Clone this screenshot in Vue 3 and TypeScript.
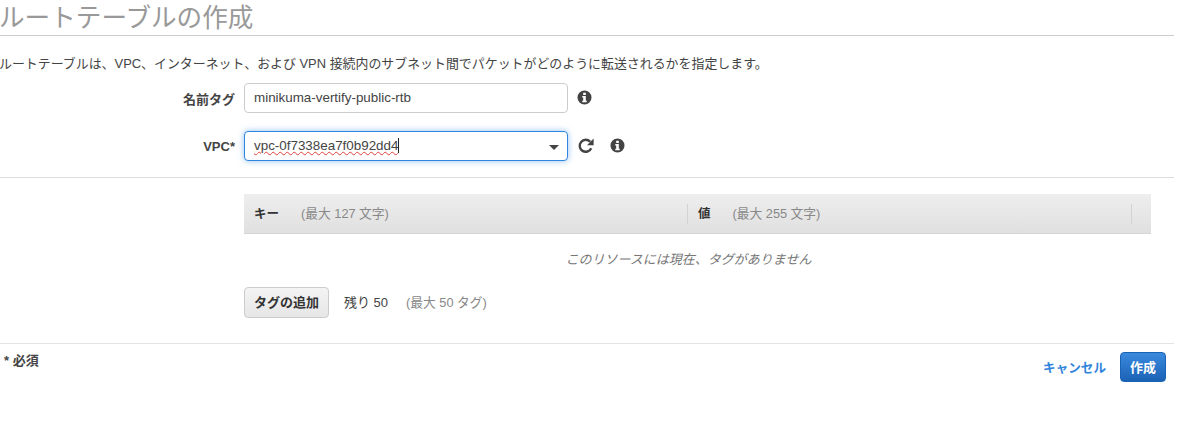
<script setup lang="ts">
const infoPath = "M8 .5a7.5 7.5 0 1 0 0 15 7.5 7.5 0 0 0 0-15ZM6.6 2.8h2.8v2.4H6.6ZM5.6 6.4h3.8v5h1v1.6H5.6v-1.6h1V8H5.6Z";
</script>

<template>
  <div class="page">
    <header class="head">
      <h1 class="title">ルートテーブルの作成</h1>
    </header>
    <p class="desc">ルートテーブルは、VPC、インターネット、および VPN 接続内のサブネット間でパケットがどのように転送されるかを指定します。</p>

    <div class="form-row name-row">
      <label class="label">名前タグ</label>
      <div class="control">minikuma-vertify-public-rtb</div>
      <svg class="info info-name" viewBox="0 0 16 16"><path fill-rule="evenodd" :d="infoPath" /></svg>
    </div>

    <div class="form-row vpc-row">
      <label class="label">VPC*</label>
      <div class="control focused">
        <span class="typed">vpc-0f7338ea7f0b92dd4</span><span class="caret"></span>
        <span class="arrow"></span>
      </div>
      <svg class="refresh" viewBox="0 0 18 18">
        <path d="M14.2 11.2A6 6 0 1 1 13.2 4.8" fill="none" stroke="#444" stroke-width="2.4" />
        <path d="M16.6 1.6v6.6H10Z" fill="#444" />
      </svg>
      <svg class="info info-vpc" viewBox="0 0 16 16"><path fill-rule="evenodd" :d="infoPath" /></svg>
    </div>

    <div class="tags">
      <div class="tag-head">
        <div class="col key"><b>キー</b><span class="hint">(最大 127 文字)</span></div>
        <div class="col val"><b>値</b><span class="hint">(最大 255 文字)</span></div>
        <div class="col end"></div>
      </div>
      <div class="empty">このリソースには現在、タグがありません</div>
      <div class="tag-actions">
        <button class="add">タグの追加</button>
        <span class="left">残り 50</span>
        <span class="hint">(最大 50 タグ)</span>
      </div>
    </div>

    <div class="footer">
      <span class="required">* 必須</span>
      <div class="buttons">
        <a class="cancel">キャンセル</a>
        <button class="create">作成</button>
      </div>
    </div>
  </div>
</template>

<style>
html, body { margin: 0; background: #fff; overflow: hidden; }
</style>

<style scoped>
.page {
  width: 1174px;
  height: 423px;
  overflow: hidden;
  color: #444;
  font-family: "Liberation Sans", "Noto Sans CJK JP", sans-serif;
  font-size: 13px;
}
.head {
  height: 35px;
  border-bottom: 1px solid #ccc;
}
.title {
  margin: 0 0 0 -1px;
  font-size: 25.6px;
  line-height: 37px;
  font-weight: 400;
  color: #999;
  white-space: nowrap;
}
.desc {
  margin: 20px 0 0 -1px;
  height: 16px;
  line-height: 16px;
  font-size: 12.93px;
  white-space: nowrap;
}
.form-row {
  display: flex;
  align-items: center;
  height: 30px;
}
.name-row { margin-top: 11px; }
.vpc-row { margin-top: 18px; }
.label {
  width: 235px;
  text-align: right;
  font-weight: 700;
  font-size: 13px;
  margin-right: 9px;
}
.control {
  position: relative;
  box-sizing: border-box;
  width: 324px;
  height: 30px;
  padding: 0 9px;
  line-height: 28px;
  border: 1px solid #ccc;
  border-radius: 4px;
  background: #fff;
  font-size: 13.4px;
  white-space: nowrap;
}
.focused {
  border-color: #2f86dd;
  box-shadow: 0 0 6px rgba(60, 140, 230, 0.55);
}
.typed {
  text-decoration: underline wavy #e0413c 1px;
  text-underline-offset: 1px;
}
.caret {
  display: inline-block;
  width: 1px;
  height: 15px;
  background: #222;
  vertical-align: -3px;
}
.arrow {
  position: absolute;
  right: 8px;
  top: 13px;
  border-left: 5px solid transparent;
  border-right: 5px solid transparent;
  border-top: 5px solid #444;
}
.info { width: 15px; height: 15px; fill: #444; flex: none; }
.info-name { margin-left: 9px; margin-bottom: 1px; }
.info-vpc { margin-left: 15px; margin-bottom: 1px; }
.refresh { width: 18px; height: 18px; margin-left: 9px; flex: none; }
.tags {
  margin-top: 16px;
  padding: 16px 23px 0 244px;
  border-top: 1px solid #ddd;
  border-bottom: 1px solid #e4e4e4;
  height: 167px;
  box-sizing: border-box;
}
.tag-head {
  display: flex;
  height: 40px;
  align-items: center;
  background: linear-gradient(#eee, #e0e0e0);
  border-bottom: 1px solid #d5d5d5;
  box-sizing: border-box;
}
.col { display: flex; align-items: center; height: 20px; padding-bottom: 2px; box-sizing: border-box; }
.col b { font-size: 12.5px; color: #333; }
.key { width: 443px; padding-left: 10px; }
.key .hint { margin-left: 22px; }
.val { width: 445px; padding-left: 10px; border-left: 1px solid #d3d3d3; border-right: 1px solid #d3d3d3; }
.val .hint { margin-left: 22px; }
.end { flex: 1; }
.hint { color: #888; font-size: 12.75px; }
.empty {
  margin-top: 17px;
  height: 18px;
  padding-right: 18px;
  line-height: 18px;
  text-align: center;
  font-style: italic;
  color: #777;
  font-size: 13px;
}
.tag-actions {
  display: flex;
  align-items: center;
  margin-top: 18px;
  height: 31px;
}
.tag-actions .left, .tag-actions .hint { margin-bottom: 2px; }
.add {
  box-sizing: border-box;
  width: 85px;
  height: 31px;
  padding: 0 0 2px;
  border: 1px solid #ccc;
  border-radius: 4px;
  background: linear-gradient(#f4f4f4, #e6e6e6);
  color: #333;
  font: 700 13px "Liberation Sans", "Noto Sans CJK JP", sans-serif;
}
.left { margin-left: 15px; margin-right: 18px; color: #444; }
.footer {
  display: flex;
  justify-content: space-between;
  padding: 8px 8px 0 4px;
}
.required { font-weight: 700; font-size: 13px; line-height: 18px; color: #444; }
.buttons { display: flex; align-items: center; }
.cancel { color: #2f84dc; font-weight: 700; font-size: 12.6px; margin-bottom: 2px; }
.create {
  box-sizing: border-box;
  width: 46px;
  height: 30px;
  margin-left: 14px;
  padding: 0 0 2px;
  border: 1px solid #1a63b3;
  border-radius: 4px;
  background: linear-gradient(#3a8ade, #1b62b5);
  color: #fff;
  font: 700 13px "Liberation Sans", "Noto Sans CJK JP", sans-serif;
}
</style>
